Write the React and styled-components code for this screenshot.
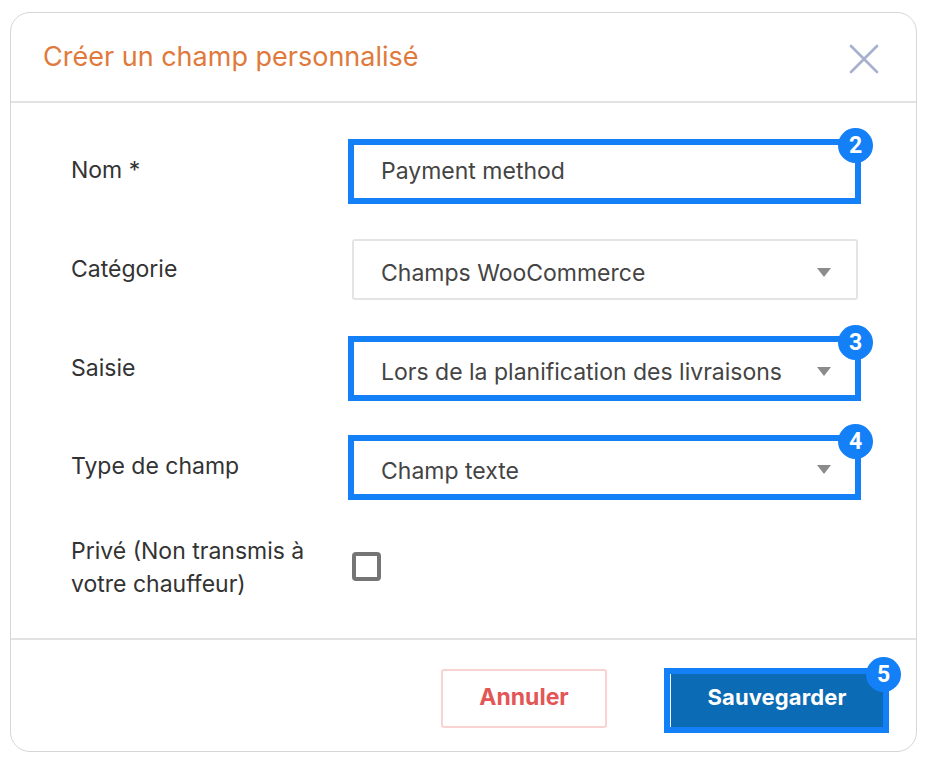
import React from 'react';
import styled, { createGlobalStyle } from 'styled-components';

const GlobalStyle = createGlobalStyle`
  * { box-sizing: border-box; }
  body {
    margin: 0;
    background: #fff;
    font-family: Inter, "Open Sans", sans-serif;
  }
`;

const Card = styled.div`
  width: 907px;
  height: 740px;
  margin: 12px 0 0 10px;
  display: flex;
  flex-direction: column;
  background: #fff;
  border: 1px solid #d6d6d6;
  border-radius: 20px;
`;

const Header = styled.div`
  height: 90px;
  padding: 0 37px 0 32px;
  display: flex;
  align-items: center;
  justify-content: space-between;
  border-bottom: 2px solid #e2e2e2;
`;

const Title = styled.div`
  margin-top: -2px;
  color: #e07a3c;
  font-size: 27px;
`;

const CloseWrap = styled.span`
  display: flex;
  margin-top: 3px;
`;

const Form = styled.div`
  flex: 1;
  padding: 37px 58px 0 60px;
  display: grid;
  grid-template-columns: 281px 1fr;
  grid-template-rows: repeat(4, 61.67px) 66px;
  row-gap: 37px;
  align-items: center;
`;

const Label = styled.div`
  color: #333;
  font-size: 23px;
  line-height: 33px;
`;

const Field = styled.div`
  position: relative;
  height: 100%;
`;

const Control = styled.div`
  height: 100%;
  padding: ${(p) => (p.$select ? '8px' : '0')} 25px 0 27px;
  display: flex;
  align-items: center;
  justify-content: space-between;
  border: 2px solid #e4e4e4;
  border-radius: 3px;
  color: #444;
  font-size: 23px;
`;

const Arrow = styled.span`
  width: 0;
  height: 0;
  margin-top: -2px;
  border-left: 7.5px solid transparent;
  border-right: 7.5px solid transparent;
  border-top: 9px solid #8b8b8b;
`;

const Highlight = styled.div`
  position: absolute;
  top: ${(p) => p.$top}px;
  right: ${(p) => p.$right}px;
  bottom: ${(p) => p.$bottom}px;
  left: ${(p) => p.$left}px;
  border: 6.5px solid #1480f8;
  pointer-events: none;
`;

const Badge = styled.span`
  position: absolute;
  top: -17px;
  right: -18px;
  width: 35px;
  height: 35px;
  display: flex;
  align-items: center;
  justify-content: center;
  border-radius: 50%;
  background: #1480f8;
  color: #fff;
  font-family: Roboto, sans-serif;
  font-size: 23px;
  font-weight: 700;
`;

const CheckRow = styled.div`
  display: flex;
  align-items: center;
  height: 100%;
`;

const Checkbox = styled.span`
  width: 29px;
  height: 29px;
  margin-top: -3px;
  border: 4px solid #757575;
  border-radius: 4px;
`;

const Footer = styled.div`
  height: 113px;
  padding: 29px 33px 0 0;
  display: flex;
  justify-content: flex-end;
  gap: 64px;
  border-top: 2px solid #e2e2e2;
`;

const CancelButton = styled.button`
  width: 166px;
  height: 59px;
  padding: 0 0 3px;
  background: #fff;
  border: 2px solid #f9d3d1;
  border-radius: 3px;
  color: #e35656;
  font-family: inherit;
  font-size: 23px;
  font-weight: 700;
`;

const SaveWrap = styled.div`
  position: relative;
  width: 212px;
  height: 59px;
`;

const SaveButton = styled.button`
  width: 100%;
  height: 100%;
  padding: 0 0 3px;
  background: #0b6bb4;
  border: none;
  color: #fff;
  font-family: inherit;
  font-size: 22px;
  font-weight: 700;
  letter-spacing: 0.1px;
`;

const CloseIcon = () => (
  <svg width="30" height="30" viewBox="0 0 30 30" fill="none">
    <path d="M2 2 L28 28 M28 2 L2 28" stroke="#a6b0cf" strokeWidth="2.6" strokeLinecap="round" />
  </svg>
);

const fields = [
  { label: 'Nom *', value: 'Payment method', badge: 2 },
  { label: 'Catégorie', value: 'Champs WooCommerce', select: true },
  { label: 'Saisie', value: 'Lors de la planification des livraisons', select: true, badge: 3 },
  { label: 'Type de champ', value: 'Champ texte', select: true, badge: 4 },
];

const App = () => {
  return (
    <>
      <GlobalStyle />
      <Card>
        <Header>
          <Title>Créer un champ personnalisé</Title>
          <CloseWrap>
            <CloseIcon />
          </CloseWrap>
        </Header>
        <Form>
          {fields.map((f) => (
            <React.Fragment key={f.label}>
              <Label>{f.label}</Label>
              <Field>
                <Control $select={f.select}>
                  {f.value}
                  {f.select && <Arrow />}
                </Control>
                {f.badge && (
                  <Highlight $top={-1} $right={-3} $bottom={-2.5} $left={-4}>
                    <Badge>{f.badge}</Badge>
                  </Highlight>
                )}
              </Field>
            </React.Fragment>
          ))}
          <Label>Privé (Non transmis à<br />votre chauffeur)</Label>
          <CheckRow>
            <Checkbox />
          </CheckRow>
        </Form>
        <Footer>
          <CancelButton>Annuler</CancelButton>
          <SaveWrap>
            <SaveButton>Sauvegarder</SaveButton>
            <Highlight $top={-1} $right={-6} $bottom={-5} $left={-7}>
              <Badge>5</Badge>
            </Highlight>
          </SaveWrap>
        </Footer>
      </Card>
    </>
  );
};

export default App;
